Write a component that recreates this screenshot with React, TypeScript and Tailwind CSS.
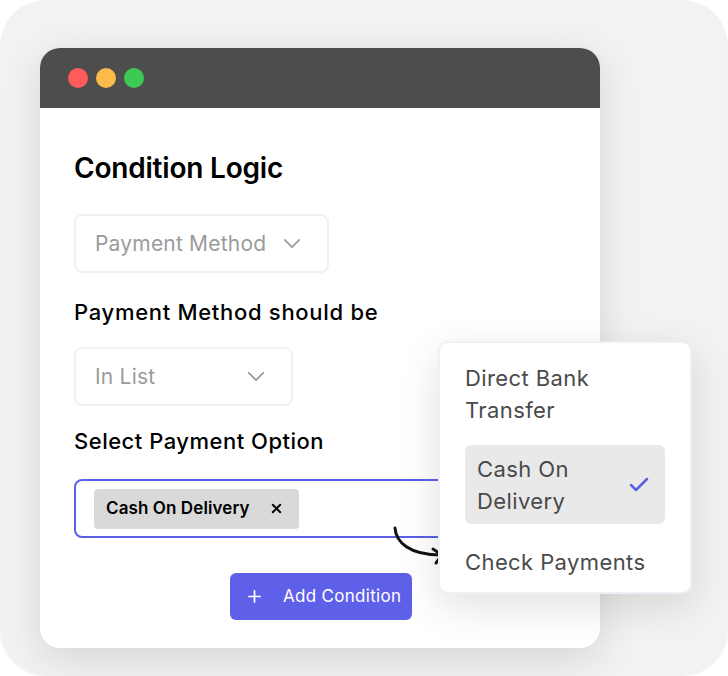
import { Plus, X, Check } from "lucide-react";

function Chevron({ className }: { className?: string }) {
  return (
    <svg viewBox="0 0 20 12" className={className} fill="none" stroke="currentColor" strokeWidth="2" strokeLinecap="round" strokeLinejoin="round">
      <path d="M2 2l8 8 8-8" />
    </svg>
  );
}

function Select({ label, width }: { label: string; width: string }) {
  return (
    <div className={`${width} h-[59px] rounded-lg border-2 border-[#eef1f6] flex items-center justify-between pl-[19px] pr-[26px] text-[21px] tracking-[0.2px] text-[#9b9b9b]`}>
      <span>{label}</span>
      <Chevron className="w-[18px] h-[11px]" />
    </div>
  );
}

export default function App() {
  return (
    <div className="w-[728px] h-[676px] bg-white" style={{ fontFamily: "Inter, 'Noto Sans', sans-serif" }}>
      <div className="relative w-[728px] h-[676px] rounded-[46px] bg-[#f3f2f0] pt-[48px] pl-[40px]">
        <div className="w-[560px] h-[600px] rounded-[20px] bg-white overflow-hidden flex flex-col shadow-[0_10px_40px_rgba(0,0,0,0.12)]">
          <div className="h-[60px] bg-[#4d4d4d] flex items-center gap-2 pl-[28px] shrink-0">
            <span className="w-5 h-5 rounded-full bg-[#fe5c5c]" />
            <span className="w-5 h-5 rounded-full bg-[#fbbb4b]" />
            <span className="w-5 h-5 rounded-full bg-[#3cca53]" />
          </div>
          <div className="flex flex-col pl-[34px] pr-[34px] pt-[42px]">
            <h1 className="h-9 leading-9 text-[28px] font-semibold text-black tracking-[-0.2px]">Condition Logic</h1>
            <div className="mt-[28px]">
              <Select label="Payment Method" width="w-[255px]" />
            </div>
            <div className="mt-[24px] h-[30px] leading-[30px] text-[22px] font-medium tracking-[0.7px] text-black">Payment Method should be</div>
            <div className="mt-[20px]">
              <Select label="In List" width="w-[219px]" />
            </div>
            <div className="mt-[20px] h-[30px] leading-[30px] text-[22px] font-medium tracking-[0.5px] text-black">Select Payment Option</div>
            <div className="mt-[23px] h-[59px] rounded-lg border-2 border-[#5b5fe6] flex items-center pl-[18px]">
              <div className="h-[40px] rounded bg-[#d9d9d9] flex items-center pl-[12px] pr-[15px] gap-[19px] text-[17px] tracking-[0.1px] font-semibold text-black">
                <span>Cash On Delivery</span>
                <X className="w-[15px] h-[15px]" strokeWidth={3} />
              </div>
            </div>
            <div className="mt-[35px] ml-[156px] w-[182px] h-[47px] rounded-md bg-[#5f60e8] flex items-center pl-[15px] gap-[19px] text-white text-[17px] tracking-[0.3px]">
              <Plus className="w-[19px] h-[19px]" strokeWidth={2.2} />
              <span>Add Condition</span>
            </div>
          </div>
        </div>

        <svg className="absolute left-[390px] top-[524px] w-[60px] h-[50px]" viewBox="0 0 60 50" fill="none" stroke="#111" strokeWidth="3" strokeLinecap="round" strokeLinejoin="round">
          <path d="M5 4c1 14 14 27 46 27" />
          <path d="M43 25l9 6-6 8" />
        </svg>

        <div className="absolute left-[438px] top-[341px] w-[254px] h-[253px] rounded-[10px] bg-white border-2 border-[#eef0f6] shadow-[0_12px_40px_rgba(0,0,0,0.12)] pt-[19px] px-[25px] text-[22px] tracking-[0.4px] text-[#4a4a4a]">
          <div className="leading-[32px]">Direct Bank<br />Transfer</div>
          <div className="mt-[19px] h-[79px] rounded-md bg-[#e9e9e9] flex items-center justify-between pl-[12px] pr-[14px]">
            <div className="leading-[32px]">Cash On<br />Delivery</div>
            <Check className="w-[24px] h-[24px] text-[#5b5fe6]" strokeWidth={2.5} />
          </div>
          <div className="mt-[22px] leading-[32px]">Check Payments</div>
        </div>
      </div>
    </div>
  );
}
